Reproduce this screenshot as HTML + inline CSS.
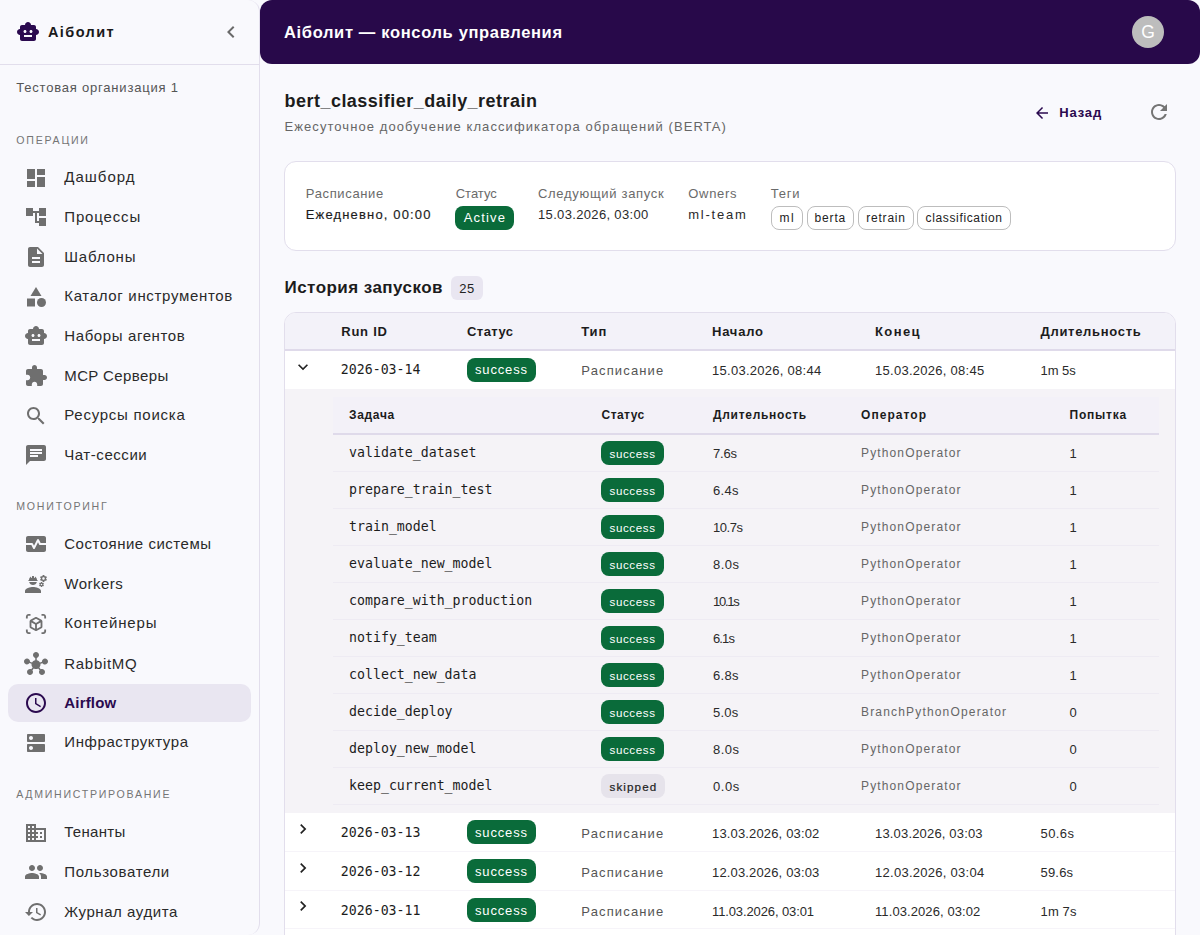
<!DOCTYPE html><html lang="ru"><head><meta charset="utf-8"><title>Аiболит — консоль управления</title><style>

html,body{margin:0;padding:0}
body{width:1200px;height:935px;overflow:hidden;position:relative;background:#f9f9fd;font-family:"Liberation Sans", sans-serif;color:#1e1e1e}
.t{position:absolute;white-space:nowrap;margin:0;padding:0;font-weight:400}
.ic{position:absolute;display:block}
aside,header,main,section,nav{display:block}
aside{position:absolute;left:0;top:0;width:259px;height:935px;border-right:1px solid #e2deec;border-radius:0 12px 12px 0;background:#f9f9fd;box-sizing:content-box}
.sbhead{position:absolute;left:0;top:0;width:259px;height:64px;border-bottom:1px solid #e2deec}
header{position:absolute;left:260px;top:0;width:940px;height:64px;background:#28094a;border-radius:12px}
.chip{position:absolute;border-radius:6px;box-sizing:border-box}

</style></head><body>
<aside>
<div class="sbhead"></div>
<svg class="ic" style="left:16.00px;top:20.00px;fill:#2b0a4f" width="24" height="24" viewBox="0 0 24 24"><path d="M20 9V7c0-1.1-.9-2-2-2h-3c0-1.66-1.34-3-3-3S9 3.34 9 5H6c-1.1 0-2 .9-2 2v2c-1.66 0-3 1.34-3 3s1.34 3 3 3v4c0 1.1.9 2 2 2h12c1.1 0 2-.9 2-2v-4c1.66 0 3-1.34 3-3s-1.34-3-3-3zM7.5 11.5c0-.83.67-1.5 1.5-1.5s1.5.67 1.5 1.5S9.83 13 9 13s-1.5-.67-1.5-1.5zM16 17H8v-2h8v2zm-1-4c-.83 0-1.5-.67-1.5-1.5S14.17 10 15 10s1.5.67 1.5 1.5S15.83 13 15 13z"/></svg>
<span class="t" style="letter-spacing:1.402px;left:48.00px;top:22.68px;font-size:14.5px;line-height:19px;font-weight:700;color:#1a1a1a;">Аiболит</span>
<svg class="ic" style="left:219.00px;top:20.00px;fill:#6a6a6a" width="24" height="24" viewBox="0 0 24 24"><path d="M15.41 7.41 14 6l-6 6 6 6 1.410-1.410L10.830 12z"/></svg>
<span class="t" style="letter-spacing:0.800px;left:16.20px;top:78.80px;font-size:13px;line-height:17px;color:#555;">Тестовая организация 1</span>
<nav>
<span class="t" style="letter-spacing:1.761px;left:16.25px;top:132.68px;font-size:10.6px;line-height:14px;color:#757575;">ОПЕРАЦИИ</span>
<svg class="ic" style="left:24.00px;top:165.60px;fill:#6f6f6f" width="24" height="24" viewBox="0 0 24 24"><path d="M3 13h8V3H3v10zm0 8h8v-6H3v6zm10 0h8V11h-8v10zm0-18v6h8V3h-8z"/></svg>
<span class="t" style="letter-spacing:1.005px;left:64.25px;top:167.30px;font-size:15px;line-height:20px;color:#2a2a2a;">Дашборд</span>
<svg class="ic" style="left:24.00px;top:205.26px;fill:#6f6f6f" width="24" height="24" viewBox="0 0 24 24"><path d="M22 11V3h-7v3H9V3H2v8h7V8h2v10h4v3h7v-8h-7v3h-2V8h2v3z"/></svg>
<span class="t" style="letter-spacing:0.855px;left:64.25px;top:206.96px;font-size:15px;line-height:20px;color:#2a2a2a;">Процессы</span>
<svg class="ic" style="left:24.00px;top:244.92px;fill:#6f6f6f" width="24" height="24" viewBox="0 0 24 24"><path d="M14 2H6c-1.1 0-1.99.9-1.99 2L4 20c0 1.1.89 2 1.99 2H18c1.1 0 2-.9 2-2V8l-6-6zm2 16H8v-2h8v2zm0-4H8v-2h8v2zm-3-5V3.5L18.5 9H13z"/></svg>
<span class="t" style="letter-spacing:0.818px;left:64.25px;top:246.62px;font-size:15px;line-height:20px;color:#2a2a2a;">Шаблоны</span>
<svg class="ic" style="left:24.00px;top:284.58px;fill:#6f6f6f" width="24" height="24" viewBox="0 0 24 24"><path d="M12 2l-5.5 9h11z"/><circle cx="17.5" cy="17.5" r="4.5"/><path d="M3 13.5h8v8H3z"/></svg>
<span class="t" style="letter-spacing:0.674px;left:64.25px;top:286.28px;font-size:15px;line-height:20px;color:#2a2a2a;">Каталог инструментов</span>
<svg class="ic" style="left:24.00px;top:324.24px;fill:#6f6f6f" width="24" height="24" viewBox="0 0 24 24"><path d="M20 9V7c0-1.1-.9-2-2-2h-3c0-1.66-1.34-3-3-3S9 3.34 9 5H6c-1.1 0-2 .9-2 2v2c-1.66 0-3 1.34-3 3s1.34 3 3 3v4c0 1.1.9 2 2 2h12c1.1 0 2-.9 2-2v-4c1.66 0 3-1.34 3-3s-1.34-3-3-3zM7.5 11.5c0-.83.67-1.5 1.5-1.5s1.5.67 1.5 1.5S9.83 13 9 13s-1.5-.67-1.5-1.5zM16 17H8v-2h8v2zm-1-4c-.83 0-1.5-.67-1.5-1.5S14.17 10 15 10s1.5.67 1.5 1.5S15.83 13 15 13z"/></svg>
<span class="t" style="letter-spacing:0.613px;left:64.25px;top:325.94px;font-size:15px;line-height:20px;color:#2a2a2a;">Наборы агентов</span>
<svg class="ic" style="left:24.00px;top:363.90px;fill:#6f6f6f" width="24" height="24" viewBox="0 0 24 24"><path d="M20.5 11H19V7c0-1.1-.9-2-2-2h-4V3.5C13 2.12 11.88 1 10.5 1S8 2.12 8 3.5V5H4c-1.1 0-1.99.9-1.99 2v3.8H3.5c1.49 0 2.7 1.21 2.7 2.7s-1.21 2.7-2.7 2.7H2V20c0 1.1.9 2 2 2h3.8v-1.5c0-1.49 1.21-2.7 2.7-2.7 1.49 0 2.7 1.21 2.7 2.7V22H17c1.1 0 2-.9 2-2v-4h1.5c1.38 0 2.5-1.12 2.5-2.5S21.88 11 20.5 11z"/></svg>
<span class="t" style="letter-spacing:0.398px;left:64.25px;top:365.60px;font-size:15px;line-height:20px;color:#2a2a2a;">MCP Серверы</span>
<svg class="ic" style="left:24.00px;top:403.56px;fill:#6f6f6f" width="24" height="24" viewBox="0 0 24 24"><path d="M15.5 14h-.79l-.28-.27C15.41 12.59 16 11.11 16 9.5 16 5.91 13.09 3 9.5 3S3 5.91 3 9.5 5.91 16 9.5 16c1.61 0 3.09-.59 4.23-1.57l.27.28v.79l5 4.99L20.49 19l-4.99-5zm-6 0C7.01 14 5 11.99 5 9.5S7.01 5 9.5 5 14 7.01 14 9.5 11.99 14 9.5 14z"/></svg>
<span class="t" style="letter-spacing:0.739px;left:64.25px;top:405.26px;font-size:15px;line-height:20px;color:#2a2a2a;">Ресурсы поиска</span>
<svg class="ic" style="left:24.00px;top:443.22px;fill:#6f6f6f" width="24" height="24" viewBox="0 0 24 24"><path d="M20 2H4c-1.1 0-1.99.9-1.99 2L2 22l4-4h14c1.1 0 2-.9 2-2V4c0-1.1-.9-2-2-2zM6 9h12v2H6V9zm8 5H6v-2h8v2zm4-6H6V6h12v2z"/></svg>
<span class="t" style="letter-spacing:0.557px;left:64.25px;top:444.92px;font-size:15px;line-height:20px;color:#2a2a2a;">Чат-сессии</span>
<span class="t" style="letter-spacing:1.762px;left:16.25px;top:498.93px;font-size:10.6px;line-height:14px;color:#757575;">МОНИТОРИНГ</span>
<svg class="ic" style="left:24.00px;top:532.30px;fill:#6f6f6f" width="24" height="24" viewBox="0 0 24 24"><path d="M15.11 12.45 14 10.24l-3.11 6.21c-.16.34-.51.55-.89.55s-.73-.21-.89-.55L7.38 13H2v5c0 1.1.9 2 2 2h16c1.1 0 2-.9 2-2v-5h-6c-.38 0-.73-.21-.89-.55z"/><path d="M20 4H4c-1.1 0-2 .9-2 2v5h6c.38 0 .73.21.89.55L10 13.76l3.11-6.21c.34-.68 1.45-.68 1.79 0L16.62 11H22V6c0-1.1-.9-2-2-2z"/></svg>
<span class="t" style="letter-spacing:0.514px;left:64.25px;top:534.00px;font-size:15px;line-height:20px;color:#2a2a2a;">Состояние системы</span>
<svg class="ic" style="left:24.00px;top:571.96px;fill:#6f6f6f" width="24" height="24" viewBox="0 0 24 24"><path d="M9 15c-2.67 0-8 1.34-8 4v2h16v-2c0-2.66-5.33-4-8-4zM22.1 6.84c.01-.11.02-.22.02-.34 0-.12-.01-.23-.03-.34l.74-.58c.07-.05.08-.15.04-.22l-.7-1.21c-.04-.08-.14-.1-.21-.08l-.86.35c-.18-.14-.38-.25-.59-.34l-.13-.93c-.02-.09-.09-.15-.18-.15h-1.4c-.09 0-.16.06-.17.15l-.13.93c-.21.09-.41.21-.59.34l-.87-.35c-.08-.03-.17 0-.21.08l-.7 1.21c-.04.08-.03.17.04.22l.74.58c-.02.11-.03.23-.03.34 0 .11.01.23.03.34l-.74.58c-.07.05-.08.15-.04.22l.7 1.21c.04.08.14.1.21.08l.87-.35c.18.14.38.25.59.34l.13.93c.01.09.08.15.17.15h1.4c.09 0 .16-.06.17-.15l.13-.93c.21-.09.41-.21.59-.34l.87.35c.08.03.17 0 .21-.08l.7-1.21c.04-.08.03-.17-.04-.22l-.73-.58zm-2.6.91c-.69 0-1.25-.56-1.25-1.25s.56-1.25 1.25-1.25 1.25.56 1.25 1.25-.56 1.25-1.25 1.25zM19.92 11.68l-.5-.87c-.03-.06-.1-.08-.15-.06l-.62.25c-.13-.1-.27-.18-.42-.24l-.09-.66c-.02-.06-.08-.1-.14-.1h-1c-.06 0-.11.04-.12.11l-.09.66c-.15.06-.29.15-.42.24l-.62-.25c-.06-.02-.12 0-.15.06l-.5.87c-.03.06-.02.12.03.16l.53.41c-.01.08-.02.16-.02.24 0 .08.01.17.02.24l-.53.41c-.05.04-.06.11-.03.16l.5.87c.03.06.1.08.15.06l.62-.25c.13.1.27.18.42.24l.09.66c.01.07.06.11.12.11h1c.06 0 .12-.04.12-.11l.09-.66c.15-.06.29-.15.42-.24l.62.25c.06.02.12 0 .15-.06l.5-.87c.03-.06.02-.12-.03-.16l-.52-.41c.01-.08.02-.16.02-.24 0-.08-.01-.17-.02-.24l.53-.41c.05-.04.06-.11.04-.17zm-2.42 1.65c-.46 0-.83-.38-.83-.83 0-.46.38-.83.83-.83s.83.38.83.83c0 .46-.37.83-.83.83zM4.74 9h8.53c.27 0 .49-.22.49-.49v-.02c0-.27-.22-.49-.49-.49H13c0-1.48-.81-2.75-2-3.45v.95c0 .28-.22.5-.5.5s-.5-.22-.5-.5V4.14C9.68 4.06 9.35 4 9 4s-.68.06-1 .14V5.5c0 .28-.22.5-.5.5S7 5.78 7 5.5v-.95C5.81 5.25 5 6.52 5 8h-.26c-.27 0-.49.22-.49.49v.03c0 .26.22.48.49.48zM9 13c1.86 0 3.41-1.28 3.86-3H5.140c.45 1.72 2 3 3.860 3z"/></svg>
<span class="t" style="letter-spacing:0.490px;left:64.25px;top:573.66px;font-size:15px;line-height:20px;color:#2a2a2a;">Workers</span>
<svg class="ic" style="left:25.00px;top:612.62px;fill:#6f6f6f" width="22" height="22" viewBox="0 0 24 24"><path d="M3 4c0-.55.45-1 1-1h2V1H4C2.34 1 1 2.34 1 4v2h2V4zm0 16v-2H1v2c0 1.66 1.34 3 3 3h2v-2H4c-.55 0-1-.45-1-1zM20 1h-2v2h2c.55 0 1 .45 1 1v2h2V4c0-1.66-1.34-3-3-3zm1 19c0 .55-.45 1-1 1h-2v2h2c1.66 0 3-1.34 3-3v-2h-2v2zm-2-5.13V9.13c0-.72-.38-1.38-1-1.73l-5-2.88c-.31-.18-.65-.27-1-.27s-.69.09-1 .27l-5 2.870C5.38 7.75 5 8.41 5 9.13v5.740c0 .72.38 1.38 1 1.730l5 2.880c.31.18.65.27 1 .27s.69-.09 1-.27l5-2.880c.62-.35 1-1.010 1-1.730zm-8 2.300-4-2.300v-4.630l4 2.330v4.600zm1-6.330L8.04 8.53 12 6.250l3.960 2.280L12 10.840zm5 4.030-4 2.300v-4.600l4-2.330v4.630z"/></svg>
<span class="t" style="letter-spacing:0.856px;left:64.25px;top:613.32px;font-size:15px;line-height:20px;color:#2a2a2a;">Контейнеры</span>
<svg class="ic" style="left:24.00px;top:652.08px;fill:#6f6f6f" width="24" height="24" viewBox="0 0 24 24"><path d="M8.4 18.2c.38.5.6 1.12.6 1.8 0 1.66-1.34 3-3 3s-3-1.34-3-3 1.34-3 3-3c.44 0 .85.09 1.23.26l1.41-1.77c-.92-1.03-1.29-2.39-1.09-3.69l-2.030-.68c-.54.83-1.460 1.380-2.520 1.380-1.660 0-3-1.340-3-3s1.340-3 3-3 3 1.340 3 3v.280l2.030.68c.64-1.210 1.820-2.090 3.220-2.320V5.910C9.960 5.570 9 4.400 9 3c0-1.660 1.340-3 3-3s3 1.340 3 3c0 1.400-.96 2.570-2.250 2.910v2.230c1.400.23 2.580 1.110 3.220 2.320L18 9.780V9.500c0-1.660 1.340-3 3-3s3 1.340 3 3-1.340 3-3 3c-1.060 0-1.980-.55-2.520-1.370l-2.030.68c.2 1.290-.16 2.650-1.090 3.690l1.410 1.770c.38-.18.790-.27 1.230-.27 1.660 0 3 1.340 3 3s-1.340 3-3 3-3-1.340-3-3c0-.68.22-1.300.6-1.800l-1.410-1.770c-1.350.75-3.010.76-4.370 0L8.400 18.200z"/></svg>
<span class="t" style="letter-spacing:0.710px;left:64.25px;top:653.78px;font-size:15px;line-height:20px;color:#2a2a2a;">RabbitMQ</span>
<div style="position:absolute;left:8.00px;top:684.19px;width:242.75px;height:37.50px;background:#e9e6f1;border-radius:10px"></div>
<svg class="ic" style="left:24.00px;top:690.94px;fill:#2b0a4f" width="24" height="24" viewBox="0 0 24 24"><path d="M11.99 2C6.47 2 2 6.48 2 12s4.47 10 9.990 10C17.520 22 22 17.520 22 12S17.520 2 11.990 2zM12 20c-4.420 0-8-3.580-8-8s3.580-8 8-8 8 3.580 8 8-3.580 8-8 8zm.5-13H11v6l5.250 3.150.75-1.230-4.500-2.670z"/></svg>
<span class="t" style="letter-spacing:0.193px;left:64.25px;top:692.64px;font-size:15px;line-height:20px;font-weight:700;color:#2b0a4f;">Airflow</span>
<svg class="ic" style="left:24.00px;top:730.60px;fill:#6f6f6f" width="24" height="24" viewBox="0 0 24 24"><path d="M20 13H4c-.55 0-1 .45-1 1v6c0 .55.45 1 1 1h16c.55 0 1-.45 1-1v-6c0-.55-.45-1-1-1zM7 19c-1.100 0-2-.9-2-2s.9-2 2-2 2 .9 2 2-.9 2-2 2zM20 3H4c-.55 0-1 .45-1 1v6c0 .55.45 1 1 1h16c.55 0 1-.45 1-1V4c0-.55-.45-1-1-1zM7 9c-1.100 0-2-.9-2-2s.9-2 2-2 2 .9 2 2-.9 2-2 2z"/></svg>
<span class="t" style="letter-spacing:0.602px;left:64.25px;top:732.30px;font-size:15px;line-height:20px;color:#2a2a2a;">Инфраструктура</span>
<span class="t" style="letter-spacing:1.707px;left:16.25px;top:787.18px;font-size:10.6px;line-height:14px;color:#757575;">АДМИНИСТРИРОВАНИЕ</span>
<svg class="ic" style="left:24.00px;top:820.60px;fill:#6f6f6f" width="24" height="24" viewBox="0 0 24 24"><path d="M12 7V3H2v18h20V7H12zM6 19H4v-2h2v2zm0-4H4v-2h2v2zm0-4H4V9h2v2zm0-4H4V5h2v2zm4 12H8v-2h2v2zm0-4H8v-2h2v2zm0-4H8V9h2v2zm0-4H8V5h2v2zm10 12h-8v-2h2v-2h-2v-2h2v-2h-2V9h8v10zm-2-8h-2v2h2v-2zm0 4h-2v2h2v-2z"/></svg>
<span class="t" style="letter-spacing:0.294px;left:64.25px;top:822.30px;font-size:15px;line-height:20px;color:#2a2a2a;">Тенанты</span>
<svg class="ic" style="left:24.00px;top:860.26px;fill:#6f6f6f" width="24" height="24" viewBox="0 0 24 24"><path d="M16 11c1.66 0 2.990-1.340 2.990-3S17.660 5 16 5c-1.660 0-3 1.340-3 3s1.340 3 3 3zm-8 0c1.660 0 2.990-1.340 2.990-3S9.660 5 8 5C6.340 5 5 6.340 5 8s1.340 3 3 3zm0 2c-2.330 0-7 1.170-7 3.500V19h14v-2.500c0-2.330-4.670-3.500-7-3.500zm8 0c-.29 0-.62.020-.97.050 1.160.84 1.970 1.970 1.970 3.450V19h6v-2.500c0-2.330-4.670-3.500-7-3.500z"/></svg>
<span class="t" style="letter-spacing:0.645px;left:64.25px;top:861.96px;font-size:15px;line-height:20px;color:#2a2a2a;">Пользователи</span>
<svg class="ic" style="left:24.00px;top:899.92px;fill:#6f6f6f" width="24" height="24" viewBox="0 0 24 24"><path d="M13 3c-4.970 0-9 4.030-9 9H1l3.890 3.890.07.14L9 12H6c0-3.870 3.130-7 7-7s7 3.130 7 7-3.130 7-7 7c-1.930 0-3.680-.79-4.940-2.060l-1.420 1.420C8.270 19.990 10.510 21 13 21c4.970 0 9-4.030 9-9s-4.030-9-9-9zm-1 5v5l4.280 2.540.72-1.210-3.500-2.080V8H12z"/></svg>
<span class="t" style="letter-spacing:0.561px;left:64.25px;top:901.62px;font-size:15px;line-height:20px;color:#2a2a2a;">Журнал аудита</span>
</nav>
</aside>
<header>
<span class="t" style="letter-spacing:0.653px;left:24.00px;top:21.78px;font-size:16.5px;line-height:21px;font-weight:700;color:#fff;">Аiболит — консоль управления</span>
<div style="position:absolute;left:872.00px;top:16.00px;width:32.00px;height:32.00px;background:#bdbdbd;border-radius:50%"></div>
<span class="t" style="left:881.30px;top:20.64px;font-size:17.5px;line-height:23px;color:#fff;">G</span>
</header>
<main>
<h1 class="t" style="letter-spacing:0.477px;left:284.50px;top:89.66px;font-size:18px;line-height:23px;font-weight:700;color:#1c1c1c;">bert_classifier_daily_retrain</h1>
<span class="t" style="letter-spacing:1.073px;left:284.50px;top:118.25px;font-size:13px;line-height:17px;color:#666;">Ежесуточное дообучение классификатора обращений (BERTA)</span>
<svg class="ic" style="left:1032.70px;top:103.75px;fill:#2b0a4f" width="18" height="18" viewBox="0 0 24 24"><path d="M20 11H7.830l5.590-5.590L12 4l-8 8 8 8 1.410-1.410L7.830 13H20v-2z"/></svg>
<span class="t" style="letter-spacing:0.859px;left:1059.20px;top:104.20px;font-size:13px;line-height:17px;font-weight:700;color:#2b0a4f;">Назад</span>
<svg class="ic" style="left:1147.00px;top:100.20px;fill:#757575" width="24" height="24" viewBox="0 0 24 24"><path d="M17.650 6.350C16.200 4.900 14.210 4 12 4c-4.420 0-7.990 3.580-7.990 8s3.570 8 7.990 8c3.730 0 6.840-2.550 7.730-6h-2.080c-.82 2.330-3.040 4-5.650 4-3.310 0-6-2.690-6-6s2.690-6 6-6c1.660 0 3.140.69 4.220 1.780L13 11h7V4l-2.350 2.350z"/></svg>
<section style="position:absolute;left:284px;top:161px;width:890px;height:88px;border:1px solid #e2deec;border-radius:12px;background:#fff"></section>
<span class="t" style="letter-spacing:0.648px;left:305.75px;top:185.00px;font-size:13px;line-height:17px;color:#6a6a6a;">Расписание</span>
<span class="t" style="letter-spacing:-0.022px;left:455.75px;top:185.00px;font-size:13px;line-height:17px;color:#6a6a6a;">Статус</span>
<span class="t" style="letter-spacing:0.693px;left:538.00px;top:185.00px;font-size:13px;line-height:17px;color:#6a6a6a;">Следующий запуск</span>
<span class="t" style="letter-spacing:0.691px;left:688.25px;top:185.00px;font-size:13px;line-height:17px;color:#6a6a6a;">Owners</span>
<span class="t" style="letter-spacing:0.766px;left:770.75px;top:185.00px;font-size:13px;line-height:17px;color:#6a6a6a;">Теги</span>
<span class="t" style="letter-spacing:1.157px;left:305.75px;top:206.00px;font-size:13px;line-height:17px;color:#1c1c1c;-webkit-text-stroke:0.15px #1c1c1c;">Ежедневно, 00:00</span>
<span class="t" style="letter-spacing:0.339px;left:538.00px;top:206.00px;font-size:13px;line-height:17px;color:#2a2a2a;">15.03.2026, 03:00</span>
<span class="t" style="letter-spacing:1.758px;left:688.25px;top:206.00px;font-size:13px;line-height:17px;color:#2a2a2a;">ml-team</span>
<div style="position:absolute;left:455.25px;top:206.25px;width:58.50px;height:24.00px;background:#0a6b3a;border-radius:8px"></div>
<span class="t" style="letter-spacing:1.169px;left:463.75px;top:209.00px;font-size:13px;line-height:17px;color:#fff;">Active</span>
<div style="position:absolute;left:771.00px;top:206.25px;width:31.60px;height:23.50px;border:1px solid #bdbdbd;border-radius:8px;box-sizing:border-box;background:#fff"></div>
<span class="t" style="letter-spacing:1.578px;left:779.50px;top:210.14px;font-size:12px;line-height:16px;color:#222;">ml</span>
<div style="position:absolute;left:806.50px;top:206.25px;width:47.85px;height:23.50px;border:1px solid #bdbdbd;border-radius:8px;box-sizing:border-box;background:#fff"></div>
<span class="t" style="letter-spacing:0.848px;left:814.50px;top:210.14px;font-size:12px;line-height:16px;color:#222;">berta</span>
<div style="position:absolute;left:858.25px;top:206.25px;width:55.35px;height:23.50px;border:1px solid #bdbdbd;border-radius:8px;box-sizing:border-box;background:#fff"></div>
<span class="t" style="letter-spacing:0.789px;left:866.25px;top:210.14px;font-size:12px;line-height:16px;color:#222;">retrain</span>
<div style="position:absolute;left:917.25px;top:206.25px;width:93.35px;height:23.50px;border:1px solid #bdbdbd;border-radius:8px;box-sizing:border-box;background:#fff"></div>
<span class="t" style="letter-spacing:0.651px;left:925.50px;top:210.14px;font-size:12px;line-height:16px;color:#222;">classification</span>
<h2 class="t" style="letter-spacing:0.453px;left:284.50px;top:276.71px;font-size:17px;line-height:22px;font-weight:700;color:#1c1c1c;">История запусков</h2>
<div style="position:absolute;left:451.25px;top:276.25px;width:31.25px;height:23.25px;background:#e9e6f1;border-radius:6px"></div>
<span class="t" style="letter-spacing:0.531px;left:459.25px;top:279.70px;font-size:13px;line-height:17px;color:#222;">25</span>
<div style="position:absolute;left:284px;top:312px;width:890px;height:640px;border:1px solid #e2deec;border-radius:12px;background:#fff;overflow:hidden">
<div style="position:absolute;left:0.00px;top:0.00px;width:890.00px;height:36.00px;background:#f3f2f9"></div>
<div style="position:absolute;left:0.00px;top:36.00px;width:890.00px;height:1.75px;background:#dfdaea"></div>
<span class="t" style="letter-spacing:0.772px;left:56.25px;top:9.75px;font-size:13px;line-height:17px;font-weight:700;color:#1c1c1c;">Run ID</span>
<span class="t" style="letter-spacing:0.438px;left:182.00px;top:9.75px;font-size:13px;line-height:17px;font-weight:700;color:#1c1c1c;">Статус</span>
<span class="t" style="letter-spacing:0.852px;left:296.25px;top:9.75px;font-size:13px;line-height:17px;font-weight:700;color:#1c1c1c;">Тип</span>
<span class="t" style="letter-spacing:0.778px;left:427.00px;top:9.75px;font-size:13px;line-height:17px;font-weight:700;color:#1c1c1c;">Начало</span>
<span class="t" style="letter-spacing:1.387px;left:590.00px;top:9.75px;font-size:13px;line-height:17px;font-weight:700;color:#1c1c1c;">Конец</span>
<span class="t" style="letter-spacing:0.697px;left:755.50px;top:9.75px;font-size:13px;line-height:17px;font-weight:700;color:#1c1c1c;">Длительность</span>
<svg class="ic" style="left:8.00px;top:44.30px;fill:#222" width="20" height="20" viewBox="0 0 24 24"><path d="M16.590 8.590 12 13.170 7.410 8.590 6 10l6 6 6-6z"/></svg>
<span class="t" style="left:55.85px;top:47.88px;font-size:13.22px;line-height:17px;color:#1c1c1c;font-family:'DejaVu Sans Mono', 'Liberation Mono', monospace;">2026-03-14</span>
<div style="position:absolute;left:182.00px;top:44.75px;width:68.50px;height:24.00px;background:#0a6b3a;border-radius:8px"></div>
<span class="t" style="letter-spacing:0.839px;left:190.00px;top:48.35px;font-size:13px;line-height:17px;color:#fff;">success</span>
<span class="t" style="letter-spacing:1.148px;left:296.25px;top:49.25px;font-size:13px;line-height:17px;color:#555;">Расписание</span>
<span class="t" style="letter-spacing:0.276px;left:427.00px;top:49.25px;font-size:13px;line-height:17px;color:#2a2a2a;">15.03.2026, 08:44</span>
<span class="t" style="letter-spacing:0.276px;left:590.00px;top:49.25px;font-size:13px;line-height:17px;color:#2a2a2a;">15.03.2026, 08:45</span>
<span class="t" style="letter-spacing:-0.039px;left:755.50px;top:49.25px;font-size:13px;line-height:17px;color:#2a2a2a;">1m 5s</span>
<div style="position:absolute;left:0.00px;top:76.00px;width:890.00px;height:424.00px;background:#f5f3f7"></div>
<div style="position:absolute;left:48.00px;top:84.00px;width:826.00px;height:36.00px;background:#f3f1f8"></div>
<div style="position:absolute;left:48.00px;top:119.90px;width:826.00px;height:1.80px;background:#dfdaea"></div>
<span class="t" style="letter-spacing:0.684px;left:64.00px;top:93.84px;font-size:12px;line-height:16px;font-weight:700;color:#1c1c1c;">Задача</span>
<span class="t" style="letter-spacing:0.459px;left:316.50px;top:93.84px;font-size:12px;line-height:16px;font-weight:700;color:#1c1c1c;">Статус</span>
<span class="t" style="letter-spacing:0.709px;left:428.00px;top:93.84px;font-size:12px;line-height:16px;font-weight:700;color:#1c1c1c;">Длительность</span>
<span class="t" style="letter-spacing:1.051px;left:576.00px;top:93.84px;font-size:12px;line-height:16px;font-weight:700;color:#1c1c1c;">Оператор</span>
<span class="t" style="letter-spacing:0.789px;left:784.50px;top:93.84px;font-size:12px;line-height:16px;font-weight:700;color:#1c1c1c;">Попытка</span>
<div style="position:absolute;left:48.00px;top:158.00px;width:826.00px;height:1.00px;background:#eeebf3"></div>
<span class="t" style="left:64.10px;top:130.68px;font-size:13.22px;line-height:17px;color:#1c1c1c;font-family:'DejaVu Sans Mono', 'Liberation Mono', monospace;">validate_dataset</span>
<div style="position:absolute;left:316.25px;top:128.00px;width:62.25px;height:24.00px;background:#0a6b3a;border-radius:8px"></div>
<span class="t" style="letter-spacing:0.602px;left:324.50px;top:133.28px;font-size:11.6px;line-height:15px;color:#fff;">success</span>
<span class="t" style="letter-spacing:-0.159px;left:428.00px;top:132.40px;font-size:13px;line-height:17px;color:#2a2a2a;">7.6s</span>
<span class="t" style="letter-spacing:1.137px;left:576.00px;top:131.74px;font-size:12px;line-height:16px;color:#666;">PythonOperator</span>
<span class="t" style="left:784.50px;top:132.40px;font-size:13px;line-height:17px;color:#2a2a2a;">1</span>
<div style="position:absolute;left:48.00px;top:195.00px;width:826.00px;height:1.00px;background:#eeebf3"></div>
<span class="t" style="left:64.10px;top:167.68px;font-size:13.22px;line-height:17px;color:#1c1c1c;font-family:'DejaVu Sans Mono', 'Liberation Mono', monospace;">prepare_train_test</span>
<div style="position:absolute;left:316.25px;top:165.00px;width:62.25px;height:24.00px;background:#0a6b3a;border-radius:8px"></div>
<span class="t" style="letter-spacing:0.602px;left:324.50px;top:170.28px;font-size:11.6px;line-height:15px;color:#fff;">success</span>
<span class="t" style="letter-spacing:0.341px;left:428.00px;top:169.40px;font-size:13px;line-height:17px;color:#2a2a2a;">6.4s</span>
<span class="t" style="letter-spacing:1.137px;left:576.00px;top:168.74px;font-size:12px;line-height:16px;color:#666;">PythonOperator</span>
<span class="t" style="left:784.50px;top:169.40px;font-size:13px;line-height:17px;color:#2a2a2a;">1</span>
<div style="position:absolute;left:48.00px;top:232.00px;width:826.00px;height:1.00px;background:#eeebf3"></div>
<span class="t" style="left:64.10px;top:204.68px;font-size:13.22px;line-height:17px;color:#1c1c1c;font-family:'DejaVu Sans Mono', 'Liberation Mono', monospace;">train_model</span>
<div style="position:absolute;left:316.25px;top:202.00px;width:62.25px;height:24.00px;background:#0a6b3a;border-radius:8px"></div>
<span class="t" style="letter-spacing:0.602px;left:324.50px;top:207.28px;font-size:11.6px;line-height:15px;color:#fff;">success</span>
<span class="t" style="letter-spacing:-0.453px;left:428.00px;top:206.40px;font-size:13px;line-height:17px;color:#2a2a2a;">10.7s</span>
<span class="t" style="letter-spacing:1.137px;left:576.00px;top:205.74px;font-size:12px;line-height:16px;color:#666;">PythonOperator</span>
<span class="t" style="left:784.50px;top:206.40px;font-size:13px;line-height:17px;color:#2a2a2a;">1</span>
<div style="position:absolute;left:48.00px;top:269.00px;width:826.00px;height:1.00px;background:#eeebf3"></div>
<span class="t" style="left:64.10px;top:241.68px;font-size:13.22px;line-height:17px;color:#1c1c1c;font-family:'DejaVu Sans Mono', 'Liberation Mono', monospace;">evaluate_new_model</span>
<div style="position:absolute;left:316.25px;top:239.00px;width:62.25px;height:24.00px;background:#0a6b3a;border-radius:8px"></div>
<span class="t" style="letter-spacing:0.602px;left:324.50px;top:244.28px;font-size:11.6px;line-height:15px;color:#fff;">success</span>
<span class="t" style="letter-spacing:0.474px;left:428.00px;top:243.40px;font-size:13px;line-height:17px;color:#2a2a2a;">8.0s</span>
<span class="t" style="letter-spacing:1.137px;left:576.00px;top:242.74px;font-size:12px;line-height:16px;color:#666;">PythonOperator</span>
<span class="t" style="left:784.50px;top:243.40px;font-size:13px;line-height:17px;color:#2a2a2a;">1</span>
<div style="position:absolute;left:48.00px;top:306.00px;width:826.00px;height:1.00px;background:#eeebf3"></div>
<span class="t" style="left:64.10px;top:278.68px;font-size:13.22px;line-height:17px;color:#1c1c1c;font-family:'DejaVu Sans Mono', 'Liberation Mono', monospace;">compare_with_production</span>
<div style="position:absolute;left:316.25px;top:276.00px;width:62.25px;height:24.00px;background:#0a6b3a;border-radius:8px"></div>
<span class="t" style="letter-spacing:0.602px;left:324.50px;top:281.28px;font-size:11.6px;line-height:15px;color:#fff;">success</span>
<span class="t" style="letter-spacing:-1.253px;left:428.00px;top:280.40px;font-size:13px;line-height:17px;color:#2a2a2a;">10.1s</span>
<span class="t" style="letter-spacing:1.137px;left:576.00px;top:279.74px;font-size:12px;line-height:16px;color:#666;">PythonOperator</span>
<span class="t" style="left:784.50px;top:280.40px;font-size:13px;line-height:17px;color:#2a2a2a;">1</span>
<div style="position:absolute;left:48.00px;top:343.00px;width:826.00px;height:1.00px;background:#eeebf3"></div>
<span class="t" style="left:64.10px;top:315.68px;font-size:13.22px;line-height:17px;color:#1c1c1c;font-family:'DejaVu Sans Mono', 'Liberation Mono', monospace;">notify_team</span>
<div style="position:absolute;left:316.25px;top:313.00px;width:62.25px;height:24.00px;background:#0a6b3a;border-radius:8px"></div>
<span class="t" style="letter-spacing:0.602px;left:324.50px;top:318.28px;font-size:11.6px;line-height:15px;color:#fff;">success</span>
<span class="t" style="letter-spacing:-0.859px;left:428.00px;top:317.40px;font-size:13px;line-height:17px;color:#2a2a2a;">6.1s</span>
<span class="t" style="letter-spacing:1.137px;left:576.00px;top:316.74px;font-size:12px;line-height:16px;color:#666;">PythonOperator</span>
<span class="t" style="left:784.50px;top:317.40px;font-size:13px;line-height:17px;color:#2a2a2a;">1</span>
<div style="position:absolute;left:48.00px;top:380.00px;width:826.00px;height:1.00px;background:#eeebf3"></div>
<span class="t" style="left:64.10px;top:352.68px;font-size:13.22px;line-height:17px;color:#1c1c1c;font-family:'DejaVu Sans Mono', 'Liberation Mono', monospace;">collect_new_data</span>
<div style="position:absolute;left:316.25px;top:350.00px;width:62.25px;height:24.00px;background:#0a6b3a;border-radius:8px"></div>
<span class="t" style="letter-spacing:0.602px;left:324.50px;top:355.28px;font-size:11.6px;line-height:15px;color:#fff;">success</span>
<span class="t" style="letter-spacing:0.341px;left:428.00px;top:354.40px;font-size:13px;line-height:17px;color:#2a2a2a;">6.8s</span>
<span class="t" style="letter-spacing:1.137px;left:576.00px;top:353.74px;font-size:12px;line-height:16px;color:#666;">PythonOperator</span>
<span class="t" style="left:784.50px;top:354.40px;font-size:13px;line-height:17px;color:#2a2a2a;">1</span>
<div style="position:absolute;left:48.00px;top:417.00px;width:826.00px;height:1.00px;background:#eeebf3"></div>
<span class="t" style="left:64.10px;top:389.68px;font-size:13.22px;line-height:17px;color:#1c1c1c;font-family:'DejaVu Sans Mono', 'Liberation Mono', monospace;">decide_deploy</span>
<div style="position:absolute;left:316.25px;top:387.00px;width:62.25px;height:24.00px;background:#0a6b3a;border-radius:8px"></div>
<span class="t" style="letter-spacing:0.602px;left:324.50px;top:392.28px;font-size:11.6px;line-height:15px;color:#fff;">success</span>
<span class="t" style="letter-spacing:0.207px;left:428.00px;top:391.40px;font-size:13px;line-height:17px;color:#2a2a2a;">5.0s</span>
<span class="t" style="letter-spacing:1.171px;left:576.00px;top:390.74px;font-size:12px;line-height:16px;color:#666;">BranchPythonOperator</span>
<span class="t" style="left:784.50px;top:391.40px;font-size:13px;line-height:17px;color:#2a2a2a;">0</span>
<div style="position:absolute;left:48.00px;top:454.00px;width:826.00px;height:1.00px;background:#eeebf3"></div>
<span class="t" style="left:64.10px;top:426.68px;font-size:13.22px;line-height:17px;color:#1c1c1c;font-family:'DejaVu Sans Mono', 'Liberation Mono', monospace;">deploy_new_model</span>
<div style="position:absolute;left:316.25px;top:424.00px;width:62.25px;height:24.00px;background:#0a6b3a;border-radius:8px"></div>
<span class="t" style="letter-spacing:0.602px;left:324.50px;top:429.28px;font-size:11.6px;line-height:15px;color:#fff;">success</span>
<span class="t" style="letter-spacing:0.474px;left:428.00px;top:428.40px;font-size:13px;line-height:17px;color:#2a2a2a;">8.0s</span>
<span class="t" style="letter-spacing:1.137px;left:576.00px;top:427.74px;font-size:12px;line-height:16px;color:#666;">PythonOperator</span>
<span class="t" style="left:784.50px;top:428.40px;font-size:13px;line-height:17px;color:#2a2a2a;">0</span>
<div style="position:absolute;left:48.00px;top:491.00px;width:826.00px;height:1.00px;background:#eeebf3"></div>
<span class="t" style="left:64.10px;top:463.68px;font-size:13.22px;line-height:17px;color:#1c1c1c;font-family:'DejaVu Sans Mono', 'Liberation Mono', monospace;">keep_current_model</span>
<div style="position:absolute;left:316.25px;top:461.00px;width:63.50px;height:24.00px;background:#e6e3eb;border-radius:8px"></div>
<span class="t" style="letter-spacing:1.122px;left:324.50px;top:466.28px;font-size:11.6px;line-height:15px;color:#222;-webkit-text-stroke:0.2px #222;">skipped</span>
<span class="t" style="letter-spacing:0.541px;left:428.00px;top:465.40px;font-size:13px;line-height:17px;color:#2a2a2a;">0.0s</span>
<span class="t" style="letter-spacing:1.137px;left:576.00px;top:464.74px;font-size:12px;line-height:16px;color:#666;">PythonOperator</span>
<span class="t" style="left:784.50px;top:465.40px;font-size:13px;line-height:17px;color:#2a2a2a;">0</span>
<svg class="ic" style="left:7.80px;top:506.20px;fill:#222" width="20" height="20" viewBox="0 0 24 24"><path d="M10 6 8.590 7.410 13.170 12l-4.580 4.590L10 18l6-6z"/></svg>
<span class="t" style="left:55.85px;top:511.48px;font-size:13.22px;line-height:17px;color:#1c1c1c;font-family:'DejaVu Sans Mono', 'Liberation Mono', monospace;">2026-03-13</span>
<div style="position:absolute;left:182.00px;top:507.35px;width:68.50px;height:24.00px;background:#0a6b3a;border-radius:8px"></div>
<span class="t" style="letter-spacing:0.839px;left:190.00px;top:510.95px;font-size:13px;line-height:17px;color:#fff;">success</span>
<span class="t" style="letter-spacing:1.148px;left:296.25px;top:511.85px;font-size:13px;line-height:17px;color:#555;">Расписание</span>
<span class="t" style="letter-spacing:0.154px;left:427.00px;top:511.85px;font-size:13px;line-height:17px;color:#2a2a2a;">13.03.2026, 03:02</span>
<span class="t" style="letter-spacing:0.173px;left:590.00px;top:511.85px;font-size:13px;line-height:17px;color:#2a2a2a;">13.03.2026, 03:03</span>
<span class="t" style="letter-spacing:0.397px;left:755.50px;top:511.85px;font-size:13px;line-height:17px;color:#2a2a2a;">50.6s</span>
<div style="position:absolute;left:0.00px;top:538.25px;width:890.00px;height:1.00px;background:#f6f4f9"></div>
<svg class="ic" style="left:7.80px;top:544.70px;fill:#222" width="20" height="20" viewBox="0 0 24 24"><path d="M10 6 8.590 7.410 13.170 12l-4.580 4.590L10 18l6-6z"/></svg>
<span class="t" style="left:55.85px;top:550.18px;font-size:13.22px;line-height:17px;color:#1c1c1c;font-family:'DejaVu Sans Mono', 'Liberation Mono', monospace;">2026-03-12</span>
<div style="position:absolute;left:182.00px;top:546.05px;width:68.50px;height:24.00px;background:#0a6b3a;border-radius:8px"></div>
<span class="t" style="letter-spacing:0.839px;left:190.00px;top:549.65px;font-size:13px;line-height:17px;color:#fff;">success</span>
<span class="t" style="letter-spacing:1.148px;left:296.25px;top:550.55px;font-size:13px;line-height:17px;color:#555;">Расписание</span>
<span class="t" style="letter-spacing:0.154px;left:427.00px;top:550.55px;font-size:13px;line-height:17px;color:#2a2a2a;">12.03.2026, 03:03</span>
<span class="t" style="letter-spacing:0.273px;left:590.00px;top:550.55px;font-size:13px;line-height:17px;color:#2a2a2a;">12.03.2026, 03:04</span>
<span class="t" style="letter-spacing:0.197px;left:755.50px;top:550.55px;font-size:13px;line-height:17px;color:#2a2a2a;">59.6s</span>
<div style="position:absolute;left:0.00px;top:576.75px;width:890.00px;height:1.00px;background:#f6f4f9"></div>
<svg class="ic" style="left:7.80px;top:583.20px;fill:#222" width="20" height="20" viewBox="0 0 24 24"><path d="M10 6 8.590 7.410 13.170 12l-4.580 4.590L10 18l6-6z"/></svg>
<span class="t" style="left:55.85px;top:589.28px;font-size:13.22px;line-height:17px;color:#1c1c1c;font-family:'DejaVu Sans Mono', 'Liberation Mono', monospace;">2026-03-11</span>
<div style="position:absolute;left:182.00px;top:585.15px;width:68.50px;height:24.00px;background:#0a6b3a;border-radius:8px"></div>
<span class="t" style="letter-spacing:0.839px;left:190.00px;top:588.75px;font-size:13px;line-height:17px;color:#fff;">success</span>
<span class="t" style="letter-spacing:1.148px;left:296.25px;top:589.65px;font-size:13px;line-height:17px;color:#555;">Расписание</span>
<span class="t" style="letter-spacing:-0.116px;left:427.00px;top:589.65px;font-size:13px;line-height:17px;color:#2a2a2a;">11.03.2026, 03:01</span>
<span class="t" style="letter-spacing:0.090px;left:590.00px;top:589.65px;font-size:13px;line-height:17px;color:#2a2a2a;">11.03.2026, 03:02</span>
<span class="t" style="letter-spacing:0.148px;left:755.50px;top:589.65px;font-size:13px;line-height:17px;color:#2a2a2a;">1m 7s</span>
<div style="position:absolute;left:0.00px;top:615.25px;width:890.00px;height:1.00px;background:#f6f4f9"></div>
</div>
</main>
</body></html>
